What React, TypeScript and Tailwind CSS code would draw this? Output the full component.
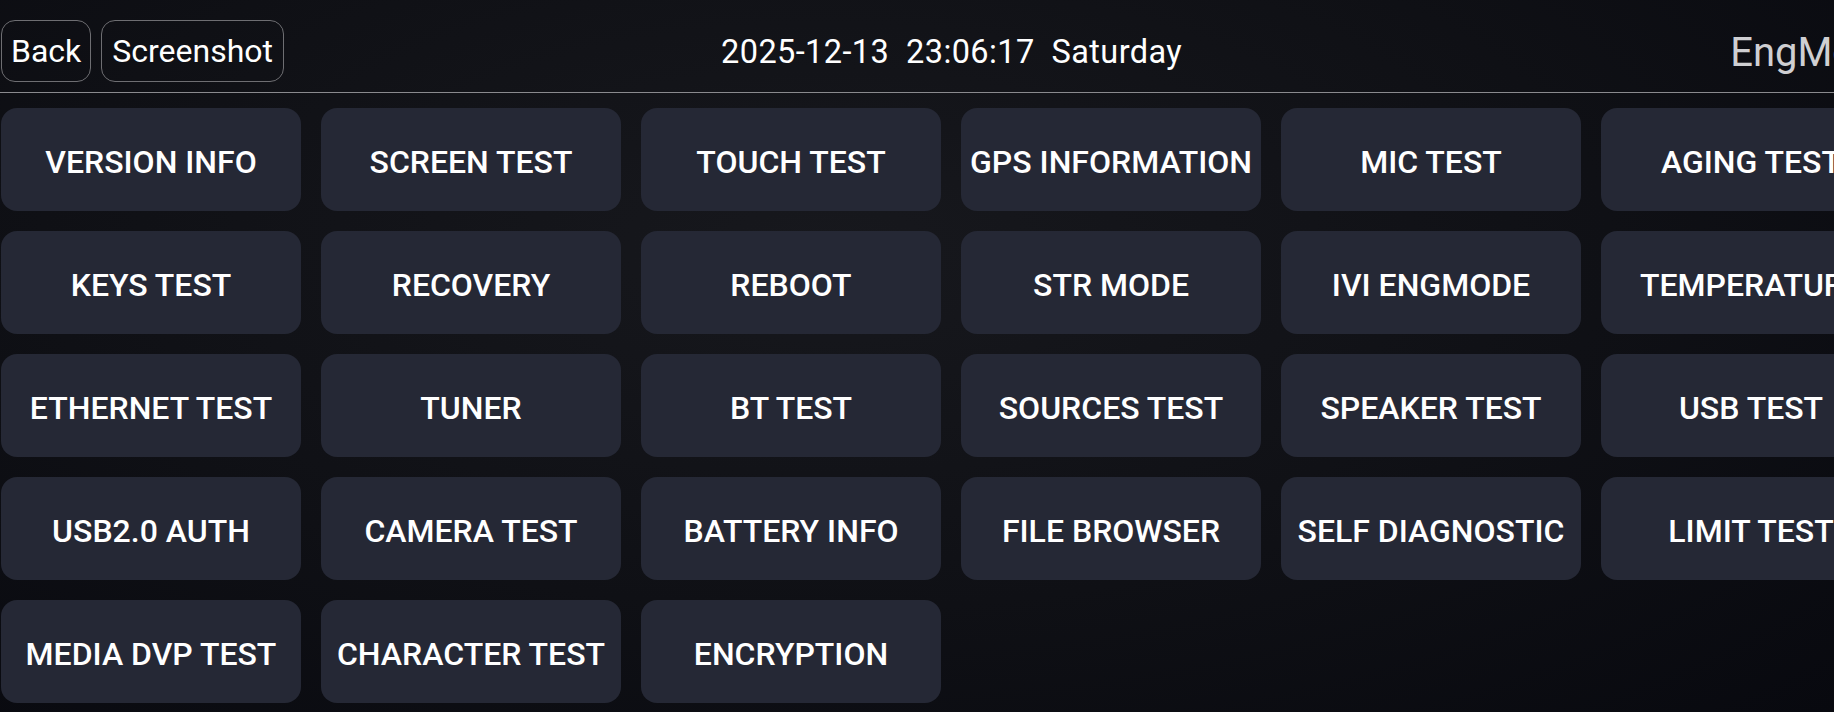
const rows: string[][] = [
  ['VERSION INFO', 'SCREEN TEST', 'TOUCH TEST', 'GPS INFORMATION', 'MIC TEST', 'AGING TEST'],
  ['KEYS TEST', 'RECOVERY', 'REBOOT', 'STR MODE', 'IVI ENGMODE', 'TEMPERATURE'],
  ['ETHERNET TEST', 'TUNER', 'BT TEST', 'SOURCES TEST', 'SPEAKER TEST', 'USB TEST'],
  ['USB2.0 AUTH', 'CAMERA TEST', 'BATTERY INFO', 'FILE BROWSER', 'SELF DIAGNOSTIC', 'LIMIT TEST'],
  ['MEDIA DVP TEST', 'CHARACTER TEST', 'ENCRYPTION'],
];

export default function App() {
  return (
    <main className="w-[1834px] h-[712px] overflow-hidden bg-[radial-gradient(ellipse_at_45%_35%,#17181d_0%,#0f1015_55%,#08090f_100%)] font-['Roboto','Liberation_Sans',sans-serif] text-white">
      <header className="h-[93px] pt-[20px] flex items-start whitespace-nowrap border-b border-[#8a8a8e]">
        <button className="ml-[1px] h-[62px] px-[9px] rounded-[14px] border border-[#6e6e72] text-[32px] leading-none">
          Back
        </button>
        <button className="ml-[10px] h-[62px] px-[10px] rounded-[14px] border border-[#6e6e72] text-[32px] leading-none">
          Screenshot
        </button>
        <div className="ml-[437px] h-[62px] pt-[3px] flex items-center text-[32.5px] leading-none tracking-[0.4px]">
          2025-12-13&nbsp;&nbsp;23:06:17&nbsp;&nbsp;Saturday
        </div>
        <div className="ml-[548px] h-[62px] pt-[3px] flex items-center text-[40px] leading-none text-[#cfcfd2]">EngMode</div>
      </header>

      <div className="pt-[15px] pl-[1px] w-[1920px]">
        <div className="grid grid-cols-[repeat(6,300px)] auto-rows-[103px] gap-[20px]">
          {rows.flat().map((label) => (
            <button
              key={label}
              className="rounded-[16px] bg-[#252835] flex items-center justify-center pt-[4px] text-[32px] font-medium whitespace-nowrap"
            >
              {label}
            </button>
          ))}
        </div>
      </div>
    </main>
  );
}
